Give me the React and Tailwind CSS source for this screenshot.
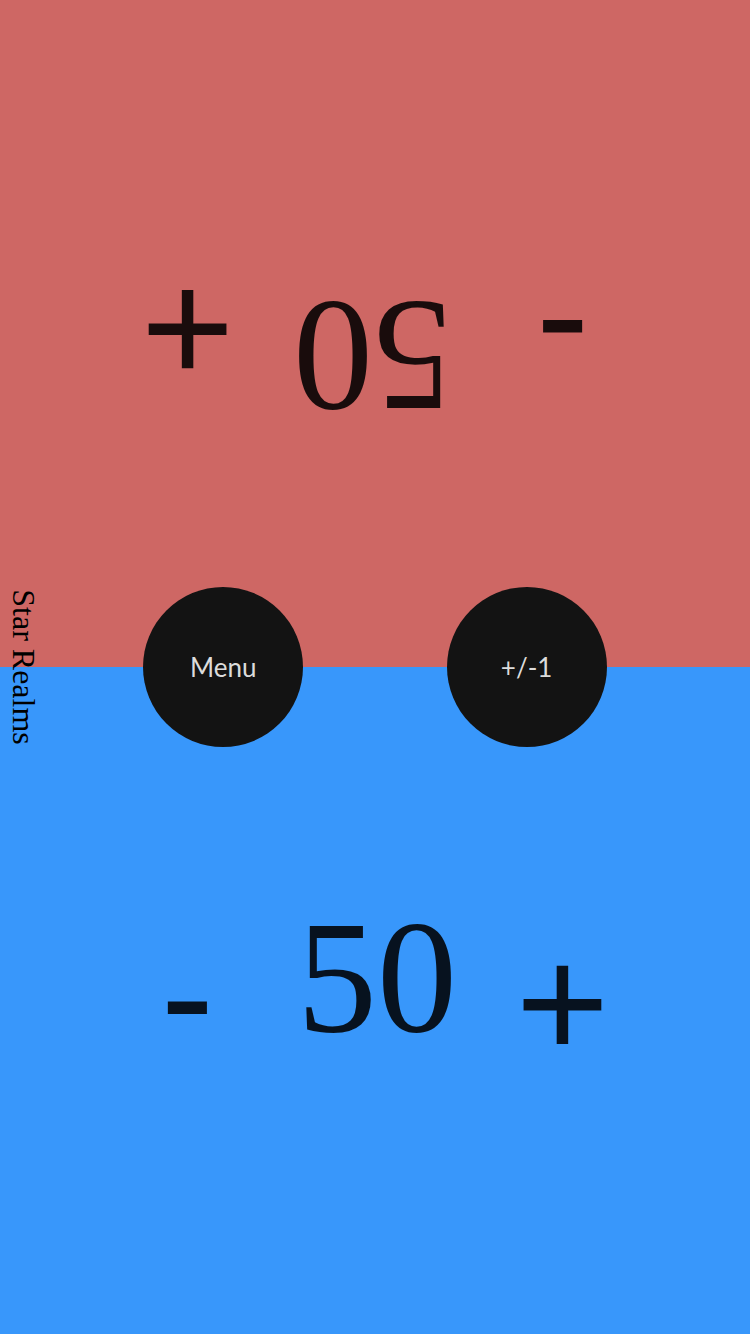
export default function App() {
  return (
    <div className="relative h-screen w-full overflow-hidden">
      {/* PLAYER 2 (upside down) */}
      <PlayerHalf bg="bg-[#ce6764]" flipped />

      {/* PLAYER 1 */}
      <PlayerHalf bg="bg-[#3897fb]" />

      {/* MIDDLE BUTTONS */}
      <div className="absolute inset-x-0 top-1/2 -translate-y-1/2 flex justify-evenly">
        <RoundButton label="Menu" />
        <RoundButton label="+/-1" />
      </div>

      {/* TITLE */}
      <div className="absolute left-[5px] top-1/2 -translate-y-1/2 [writing-mode:vertical-rl] text-[32px] leading-[1.15] text-black font-['Times_New_Roman','Liberation_Serif',serif]">
        Star Realms
      </div>
    </div>
  );
}

function PlayerHalf({ bg, flipped }) {
  return (
    <div
      className={`relative h-1/2 w-full flex text-black/[0.88] ${bg} ${
        flipped ? "rotate-180" : ""
      }`}
    >
      <button className="w-1/2 h-full flex items-center justify-center text-[160px] leading-none font-['Liberation_Sans',sans-serif]">
        <span className="-translate-y-[6px]">-</span>
      </button>
      <button className="w-1/2 h-full flex items-center justify-center text-[160px] leading-none font-['Liberation_Sans',sans-serif]">
        <span className="translate-y-[2px]">+</span>
      </button>

      <div className="absolute inset-0 flex items-center justify-center pointer-events-none">
        <span className="text-[160px] leading-none -translate-y-[24px] translate-x-[2px] font-['Times_New_Roman','Liberation_Serif',serif]">
          50
        </span>
      </div>
    </div>
  );
}

function RoundButton({ label }) {
  return (
    <button className="w-[160px] h-[160px] rounded-full bg-[#131313] text-[#dcdcdc] text-[26px] flex items-center justify-center font-['Lato',sans-serif]">
      {label}
    </button>
  );
}
